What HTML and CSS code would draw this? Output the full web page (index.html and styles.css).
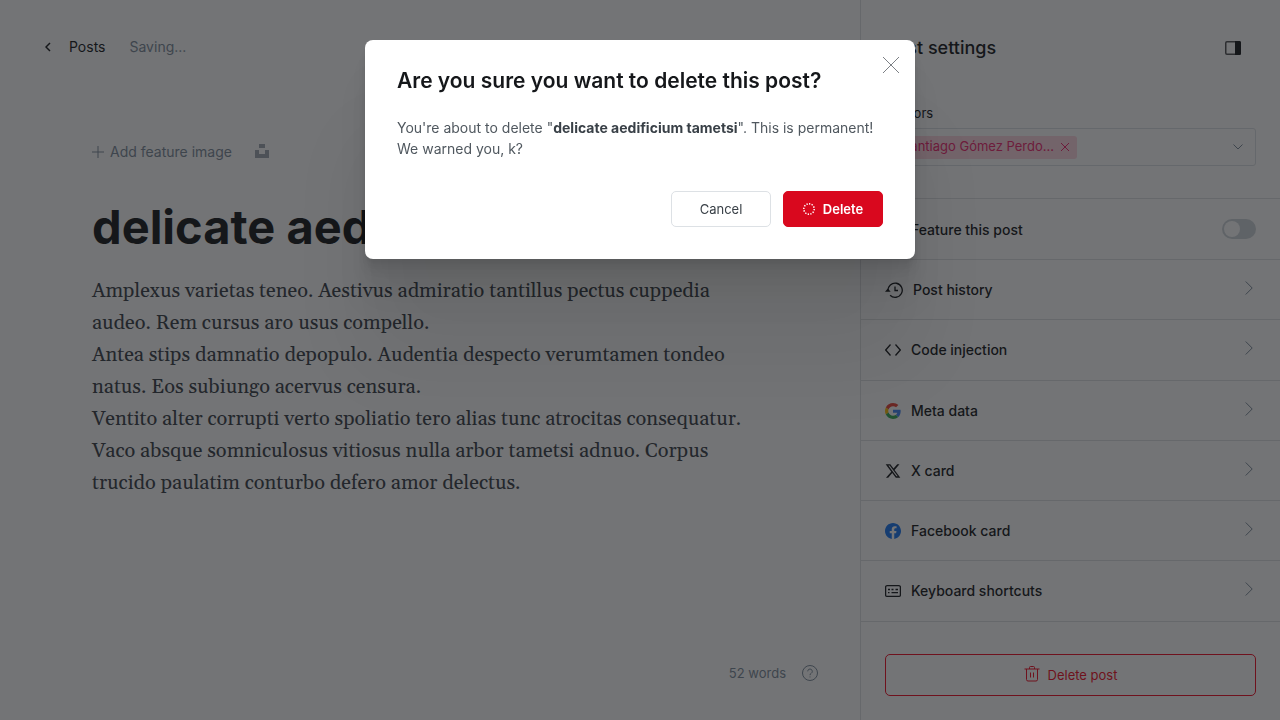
FILE: index.html
```html
<!DOCTYPE html>
<html lang="en">
<head>
<meta charset="utf-8">
<meta name="viewport" content="width=device-width, initial-scale=1">
<title>Post editor</title>
<link rel="stylesheet" href="styles.css">
</head>
<body>
<div class="app">
  <main class="editor">
    <header class="topbar">
      <a class="back" href="#">
        <svg class="back-icon" viewBox="0 0 6 10" aria-hidden="true"><path d="M5 1 1 5l4 4"/></svg>
        <span>Posts</span>
      </a>
      <span class="status">Saving...</span>
    </header>
    <div class="content">
      <div class="feature">
        <button class="feature-add" type="button">
          <svg class="plus-icon" viewBox="0 0 12 12" aria-hidden="true"><path d="M6 0v12M0 6h12"/></svg>
          <span>Add feature image</span>
        </button>
        <button class="unsplash" type="button" aria-label="Unsplash">
          <svg viewBox="0 0 14 14" aria-hidden="true"><path d="M4 0h6v4H4zM0 6h4v4h6V6h4v8H0z"/></svg>
        </button>
      </div>
      <h1 class="post-title">delicate aedificium tametsi</h1>
      <div class="post-body">
        <p>Amplexus varietas teneo. Aestivus admiratio tantillus pectus cuppedia audeo. Rem cursus aro usus compello.</p>
        <p>Antea stips damnatio depopulo. Audentia despecto verumtamen tondeo natus. Eos subiungo acervus censura.</p>
        <p>Ventito alter corrupti verto spoliatio tero alias tunc atrocitas consequatur.</p>
        <p>Vaco absque somniculosus vitiosus nulla arbor tametsi adnuo. Corpus trucido paulatim conturbo defero amor delectus.</p>
      </div>
    </div>
    <footer class="editor-footer">
      <span>52 words</span>
      <a class="help" href="#" aria-label="Help">
        <svg viewBox="0 0 16 16" aria-hidden="true"><circle cx="8" cy="8" r="7.5"/><path d="M5.7 6.3a2.3 2.3 0 1 1 3.5 2C8.4 8.800 8 9.100 8 10.200"/><path d="M8 11.500v.900"/></svg>
      </a>
    </footer>
  </main>

  <aside class="settings">
    <header class="settings-head">
      <h2>Post settings</h2>
      <button class="panel-toggle" type="button" aria-label="Toggle settings">
        <svg viewBox="0 0 16 14" aria-hidden="true"><rect opacity=".75" x=".75" y=".75" width="14.500" height="12.500" rx="1.200"/><path class="solid" d="M10 0h4.500A1.500 1.500 0 0 1 16 1.500v11a1.500 1.500 0 0 1-1.500 1.500H10z"/></svg>
      </button>
    </header>
    <div class="authors">
      <label for="authors-input">Authors</label>
      <div class="token-field">
        <span class="token">
          <span class="token-name">Santiago Gómez Perdo...</span>
          <button type="button" aria-label="Remove author"><svg viewBox="0 0 10 10" aria-hidden="true"><path d="m1 1 8 8M9 1 1 9"/></svg></button>
        </span>
        <input id="authors-input" type="text">
        <svg class="caret" viewBox="0 0 10 6" aria-hidden="true"><path d="m.5.5 4.500 4.500L9.500.5"/></svg>
      </div>
    </div>
    <div class="rows">
      <label class="row row-tall row-feature">
        <svg class="row-icon" viewBox="0 0 16 16" aria-hidden="true"><path d="m8 1 2.200 4.500 5 .7-3.600 3.500.8 5L8 12.400l-4.400 2.300.8-5L.8 6.200l5-.7z"/></svg>
        <span class="row-label">Feature this post</span>
        <input class="switch" type="checkbox">
      </label>
      <button class="row" type="button">
        <svg class="row-icon row-icon-wide" viewBox="0 0 18 16" aria-hidden="true"><path d="M3.100 9a7.100 7.100 0 1 1 2 4.200"/><path d="M10 4.500V8.500h3"/><path class="solid" d="M0 9.800 2.800 6.600 5.700 9.800z"/></svg>
        <span class="row-label">Post history</span>
        <svg class="chevron" viewBox="0 0 8 14" aria-hidden="true"><path d="m.7.5 6.500 6.500-6.500 6.500"/></svg>
      </button>
      <button class="row row-tall" type="button">
        <svg class="row-icon" viewBox="0 0 16 16" aria-hidden="true"><path d="M5.500 2.500.7 8l4.800 5.500M10.500 2.500 15.300 8l-4.800 5.500"/></svg>
        <span class="row-label">Code injection</span>
        <svg class="chevron" viewBox="0 0 8 14" aria-hidden="true"><path d="m.7.5 6.500 6.500-6.500 6.500"/></svg>
      </button>
      <button class="row" type="button">
        <svg class="row-icon brand" viewBox="0 0 48 48" aria-hidden="true"><path fill="#EA4335" d="M24 9.500c3.540 0 6.710 1.220 9.210 3.600l6.850-6.850C35.900 2.380 30.470 0 24 0 14.620 0 6.510 5.380 2.560 13.220l7.980 6.190C12.430 13.720 17.740 9.500 24 9.500z"/><path fill="#4285F4" d="M46.980 24.550c0-1.570-.15-3.090-.38-4.550H24v9.020h12.940c-.58 2.960-2.260 5.480-4.780 7.180l7.730 6c4.510-4.180 7.090-10.360 7.090-17.650z"/><path fill="#FBBC05" d="M10.530 28.590c-.48-1.450-.76-2.990-.76-4.590s.27-3.140.76-4.590l-7.980-6.190C.92 16.460 0 20.120 0 24c0 3.880.92 7.540 2.560 10.780l7.970-6.190z"/><path fill="#34A853" d="M24 48c6.480 0 11.930-2.130 15.890-5.810l-7.730-6c-2.150 1.450-4.920 2.300-8.160 2.300-6.260 0-11.570-4.220-13.470-9.910l-7.980 6.190C6.510 42.620 14.620 48 24 48z"/></svg>
        <span class="row-label">Meta data</span>
        <svg class="chevron" viewBox="0 0 8 14" aria-hidden="true"><path d="m.7.5 6.500 6.500-6.500 6.500"/></svg>
      </button>
      <button class="row" type="button">
        <svg class="row-icon brand" viewBox="0 0 24 24" aria-hidden="true"><path fill="#15171a" d="M17.750 2h3.370l-7.370 8.420L22.420 22h-6.790l-5.320-6.950L4.230 22H.86l7.880-9.010L.42 2h6.960l4.810 6.350zM16.570 19.960h1.870L6.370 3.900h-2z" transform="translate(.6)"/></svg>
        <span class="row-label">X card</span>
        <svg class="chevron" viewBox="0 0 8 14" aria-hidden="true"><path d="m.7.5 6.500 6.500-6.500 6.500"/></svg>
      </button>
      <button class="row" type="button">
        <svg class="row-icon brand" viewBox="0 0 24 24" aria-hidden="true"><path fill="#1877F2" d="M24 12.070C24 5.410 18.630 0 12 0S0 5.400 0 12.070C0 18.100 4.390 23.100 10.130 24v-8.440H7.080v-3.490h3.050V9.410c0-3.020 1.790-4.690 4.530-4.690 1.310 0 2.680.24 2.680.24v2.970h-1.510c-1.490 0-1.960.93-1.960 1.890v2.250h3.330l-.53 3.490h-2.800V24C19.610 23.100 24 18.100 24 12.070z"/></svg>
        <span class="row-label">Facebook card</span>
        <svg class="chevron" viewBox="0 0 8 14" aria-hidden="true"><path d="m.7.5 6.500 6.500-6.500 6.500"/></svg>
      </button>
      <button class="row row-tall" type="button">
        <svg class="row-icon" viewBox="0 0 16 16" aria-hidden="true"><rect x=".6" y="2.600" width="14.800" height="10.800" rx="1.500"/><path d="M3 6.500h2M6.500 6.500h2M10.500 6.500h2.500M3 9.700h1.500M6.500 9.700H13"/></svg>
        <span class="row-label">Keyboard shortcuts</span>
        <svg class="chevron" viewBox="0 0 8 14" aria-hidden="true"><path d="m.7.5 6.500 6.500-6.500 6.500"/></svg>
      </button>
    </div>
    <button class="delete-post" type="button">
      <svg viewBox="0 0 16 16" aria-hidden="true"><path d="M.5 3h15M2.500 3v10.500a1.500 1.500 0 0 0 1.500 1.500h8a1.500 1.500 0 0 0 1.500-1.500V3M5.500 3V1.500a1 1 0 0 1 1-1h3a1 1 0 0 1 1 1V3M6.500 6.500v5M9.500 6.500v5"/></svg>
      <span>Delete post</span>
    </button>
  </aside>
</div>

<div class="overlay">
  <section class="modal" role="dialog" aria-modal="true" aria-labelledby="modal-title">
    <button class="modal-close" type="button" aria-label="Close">
      <svg viewBox="0 0 16 16" aria-hidden="true"><path d="m0 0 16 16M16 0 0 16"/></svg>
    </button>
    <h2 class="modal-title" id="modal-title">Are you sure you want to delete this post?</h2>
    <p class="modal-text">You're about to delete "<strong>delicate aedificium tametsi</strong>". This is permanent! We warned you, k?</p>
    <div class="modal-actions">
      <button class="btn" type="button">Cancel</button>
      <button class="btn btn-danger" type="button">
        <svg class="spinner" viewBox="0 0 12 12" aria-hidden="true"><circle cx="6" cy="6" r="5.200" pathLength="24"/></svg>
        <span>Delete</span>
      </button>
    </div>
  </section>
</div>
</body>
</html>
```

FILE: styles.css
```css
* { box-sizing: border-box; }

body {
  margin: 0;
  background: #fff;
  color: #15171a;
  font: 14px/20px Inter, "Liberation Sans", sans-serif;
}

h1, h2, p { margin: 0; }
a { color: inherit; text-decoration: none; }
button {
  margin: 0;
  padding: 0;
  border: 0;
  background: none;
  color: inherit;
  font: inherit;
}
svg {
  display: block;
  flex: none;
  fill: none;
  stroke: currentColor;
}

.app {
  display: flex;
  min-height: 100vh;
}

/* Editor */
.editor {
  display: flex;
  flex: 1;
  flex-direction: column;
}
.topbar {
  display: flex;
  gap: 24px;
  padding: 37px 45px 0;
}
.back {
  display: flex;
  align-items: center;
  gap: 18px;
}
.back-icon {
  width: 6px;
  height: 10px;
  stroke-width: 1.5;
}
.status { color: #7c8b9a; }
.content {
  flex: 1;
  width: 100%;
  max-width: 860px;
  padding: 85px 92px 0;
}
.feature {
  display: flex;
  align-items: center;
  gap: 23px;
  color: #7c8b9a;
}
.feature-add {
  display: flex;
  align-items: center;
  gap: 6px;
}
.plus-icon { width: 12px; height: 12px; }
.unsplash {
  padding-bottom: 2px;
  color: #a0a9b2;
}
.unsplash svg {
  width: 14px;
  height: 14px;
  fill: currentColor;
  stroke: none;
}
.post-title {
  margin-top: 36px;
  overflow: hidden;
  font-size: 47px;
  font-weight: 700;
  line-height: 58px;
  white-space: nowrap;
}
.post-body {
  margin-top: 19px;
  color: #394047;
  font: 20px/32px Georgia, Gelasio, "Liberation Serif", serif;
}
.editor-footer {
  display: flex;
  align-items: center;
  justify-content: flex-end;
  gap: 16px;
  padding: 0 42px 37px;
  color: #7c8b9a;
  font-size: 13px;
}
.help svg { width: 16px; height: 16px; }

/* Settings panel */
.settings {
  flex: none;
  width: 420px;
  border-left: 1px solid #dfe1e3;
}
.settings-head {
  display: flex;
  align-items: center;
  justify-content: space-between;
  padding: 36px 39px 0 24px;
}
.settings-head h2 {
  font-size: 18px;
  font-weight: 500;
  line-height: 24px;
}
.panel-toggle svg {
  width: 16px;
  height: 14px;
  stroke-width: 1.5;
}
.solid { fill: currentColor; stroke: none; }
.authors {
  padding: 43px 24px 32px;
  font-size: 13px;
}
.authors label {
  display: block;
  margin-bottom: 5px;
}
.token-field {
  display: flex;
  align-items: center;
  height: 38px;
  padding: 0 12px 0 6px;
  border: 1px solid #dde1e5;
  border-radius: 3px;
}
.token {
  display: flex;
  align-items: center;
  gap: 6px;
  height: 23px;
  padding: 0 7px 0 10px;
  border-radius: 3px;
  background: #ffd6e0;
  color: #f0266e;
  white-space: nowrap;
}
.token-name { padding-bottom: 2px; }
.token svg { width: 10px; height: 10px; }
.token-field input {
  flex: 1;
  min-width: 0;
  border: 0;
  background: none;
  outline: 0;
  font: inherit;
}
.caret {
  width: 10px;
  height: 6px;
  color: #7c8b9a;
}
.rows { border-top: 1px solid #dfe1e3; }
.row {
  display: flex;
  align-items: center;
  gap: 10px;
  width: 100%;
  height: 60px;
  padding: 0 27px 0 24px;
  border-bottom: 1px solid #dfe1e3;
  font-weight: 500;
  text-align: left;
}
.row-tall { height: 61px; }
.row-feature {
  padding-top: 1px;
  padding-right: 24px;
}
.row-icon {
  width: 16px;
  height: 16px;
  stroke-width: 1.3;
}
.row-icon-wide { width: 18px; }
.brand { stroke: none; }
.row-label { flex: 1; }
.chevron {
  width: 8px;
  height: 14px;
  margin-bottom: 4px;
  color: #7c8b9a;
}
.switch {
  display: flex;
  flex: none;
  align-items: center;
  width: 34px;
  height: 20px;
  margin: 0 0 2px;
  padding: 2px;
  border-radius: 10px;
  background: #ced4d9;
  appearance: none;
}
.switch::before {
  width: 16px;
  height: 16px;
  border-radius: 50%;
  background: #fff;
  content: "";
}
.switch:checked { justify-content: flex-end; background: #30cf43; }
.delete-post {
  display: flex;
  align-items: center;
  justify-content: center;
  gap: 8px;
  width: calc(100% - 48px);
  height: 42px;
  margin: 32px 24px 24px;
  border: 1px solid #f50b23;
  border-radius: 5px;
  color: #f50b23;
  font-size: 13px;
}
.delete-post svg {
  width: 16px;
  height: 16px;
  margin-bottom: 2px;
}

/* Dialog */
.overlay {
  position: fixed;
  inset: 0;
  display: flex;
  align-items: flex-start;
  justify-content: center;
  padding: 40px 24px;
  background: rgba(21, 23, 26, 0.6);
}
.modal {
  position: relative;
  width: 100%;
  max-width: 550px;
  padding: 27px 32px 32px;
  border-radius: 8px;
  background: #fff;
  box-shadow:
    0 3px 2px rgba(0, 0, 0, 0.02),
    0 7px 5px rgba(0, 0, 0, 0.03),
    0 12px 10px rgba(0, 0, 0, 0.04),
    0 22px 18px rgba(0, 0, 0, 0.04),
    0 42px 33px rgba(0, 0, 0, 0.05),
    0 100px 80px rgba(0, 0, 0, 0.07);
}
.modal-close {
  position: absolute;
  top: 17px;
  right: 16px;
  color: #7c8085;
}
.modal-close svg { width: 16px; height: 16px; }
.modal-title {
  font-size: 21px;
  font-weight: 600;
  line-height: 28px;
}
.modal-text {
  margin-top: 22px;
  color: #50585f;
  line-height: 21px;
}
.modal-text strong { color: #394047; }
.modal-actions {
  display: flex;
  justify-content: flex-end;
  gap: 12px;
  margin-top: 32px;
}
.btn {
  display: flex;
  align-items: center;
  justify-content: center;
  gap: 8px;
  min-width: 100px;
  height: 36px;
  border: 1px solid #dde1e5;
  border-radius: 5px;
  color: #394047;
  font-size: 13px;
}
.btn-danger {
  border-color: #d9081e;
  background: #d9081e;
  color: #fff;
  font-weight: 600;
}
.spinner {
  width: 12px;
  height: 12px;
  stroke-width: 1.5;
  stroke-dasharray: 1 1;
}
```
